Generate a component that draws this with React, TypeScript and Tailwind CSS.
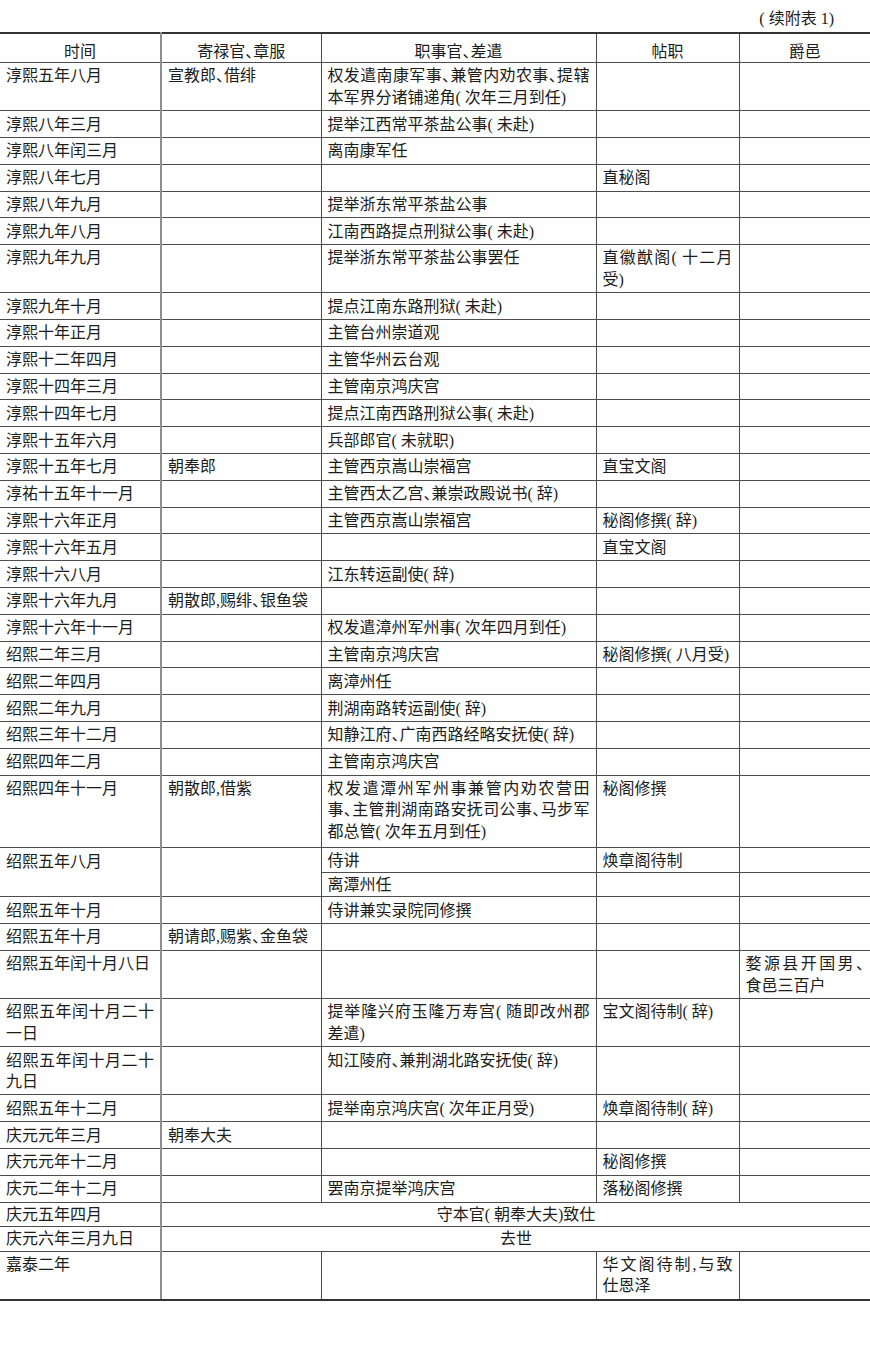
import React from "react";

// rows: [time, 寄禄官, 职事官, 帖职, 爵邑]; "|" marks a forced line break
type Row = {
  cells: string[];
  tall?: boolean;
  span?: boolean;
  compact?: boolean;
};

const rows: Row[] = [
  { cells: ["淳熙五年八月", "宣教郎、借绯", "权发遣南康军事、兼管内劝农事、提辖|本军界分诸铺递角( 次年三月到任)", "", ""] },
  { cells: ["淳熙八年三月", "", "提举江西常平茶盐公事( 未赴)", "", ""] },
  { cells: ["淳熙八年闰三月", "", "离南康军任", "", ""] },
  { cells: ["淳熙八年七月", "", "", "直秘阁", ""] },
  { cells: ["淳熙八年九月", "", "提举浙东常平茶盐公事", "", ""] },
  { cells: ["淳熙九年八月", "", "江南西路提点刑狱公事( 未赴)", "", ""] },
  { cells: ["淳熙九年九月", "", "提举浙东常平茶盐公事罢任", "直徽猷阁( 十二月|受)", ""] },
  { cells: ["淳熙九年十月", "", "提点江南东路刑狱( 未赴)", "", ""] },
  { cells: ["淳熙十年正月", "", "主管台州崇道观", "", ""] },
  { cells: ["淳熙十二年四月", "", "主管华州云台观", "", ""] },
  { cells: ["淳熙十四年三月", "", "主管南京鸿庆宫", "", ""] },
  { cells: ["淳熙十四年七月", "", "提点江南西路刑狱公事( 未赴)", "", ""] },
  { cells: ["淳熙十五年六月", "", "兵部郎官( 未就职)", "", ""] },
  { cells: ["淳熙十五年七月", "朝奉郎", "主管西京嵩山崇福宫", "直宝文阁", ""] },
  { cells: ["淳祐十五年十一月", "", "主管西太乙宫、兼崇政殿说书( 辞)", "", ""] },
  { cells: ["淳熙十六年正月", "", "主管西京嵩山崇福宫", "秘阁修撰( 辞)", ""] },
  { cells: ["淳熙十六年五月", "", "", "直宝文阁", ""] },
  { cells: ["淳熙十六八月", "", "江东转运副使( 辞)", "", ""] },
  { cells: ["淳熙十六年九月", "朝散郎,赐绯、银鱼袋", "", "", ""] },
  { cells: ["淳熙十六年十一月", "", "权发遣漳州军州事( 次年四月到任)", "", ""] },
  { cells: ["绍熙二年三月", "", "主管南京鸿庆宫", "秘阁修撰( 八月受)", ""] },
  { cells: ["绍熙二年四月", "", "离漳州任", "", ""] },
  { cells: ["绍熙二年九月", "", "荆湖南路转运副使( 辞)", "", ""] },
  { cells: ["绍熙三年十二月", "", "知静江府、广南西路经略安抚使( 辞)", "", ""] },
  { cells: ["绍熙四年二月", "", "主管南京鸿庆宫", "", ""] },
  {
    cells: ["绍熙四年十一月", "朝散郎,借紫", "权发遣潭州军州事兼管内劝农营田|事、主管荆湖南路安抚司公事、马步军|都总管( 次年五月到任)", "秘阁修撰", ""],
    tall: true,
  },
];

const rowsAfter: Row[] = [
  { cells: ["绍熙五年十月", "", "侍讲兼实录院同修撰", "", ""] },
  { cells: ["绍熙五年十月", "朝请郎,赐紫、金鱼袋", "", "", ""] },
  { cells: ["绍熙五年闰十月八日", "", "", "", "婺源县开国男、|食邑三百户"] },
  { cells: ["绍熙五年闰十月二十|一日", "", "提举隆兴府玉隆万寿宫( 随即改州郡|差遣)", "宝文阁待制( 辞)", ""] },
  { cells: ["绍熙五年闰十月二十|九日", "", "知江陵府、兼荆湖北路安抚使( 辞)", "", ""] },
  { cells: ["绍熙五年十二月", "", "提举南京鸿庆宫( 次年正月受)", "焕章阁待制( 辞)", ""] },
  { cells: ["庆元元年三月", "朝奉大夫", "", "", ""] },
  { cells: ["庆元元年十二月", "", "", "秘阁修撰", ""] },
  { cells: ["庆元二年十二月", "", "罢南京提举鸿庆宫", "落秘阁修撰", ""] },
  { cells: ["庆元五年四月", "守本官( 朝奉大夫)致仕"], span: true, compact: true },
  { cells: ["庆元六年三月九日", "去世"], span: true, compact: true },
  { cells: ["嘉泰二年", "", "", "华文阁待制,与致|仕恩泽", ""] },
];

const base = "border border-[#4d4d4d] align-top px-[6px] leading-[21.4px]";
const pad = "pt-[2.4px] pb-[2px]";
const padCompact = "pt-[1.4px] pb-[0.7px]";

function edge(i: number, last: boolean) {
  let c = "";
  if (i === 0) c += " border-l-0 border-r-2 border-r-[#8f8f8f]";
  if (i === 4) c += " border-r-0";
  if (last) c += " border-b-2 border-b-[#333]";
  return c;
}

function Lines({ text }: { text: string }) {
  const lines = text.split("|");
  return (
    <>
      {lines.map((l, i) => (
        <span
          key={i}
          className={
            i < lines.length - 1
              ? "block whitespace-nowrap text-justify [text-align-last:justify]"
              : "block whitespace-nowrap"
          }
        >
          {l || "\u00a0"}
        </span>
      ))}
    </>
  );
}

function TableRow({ row, last }: { row: Row; last?: boolean }) {
  const p = row.compact ? padCompact : row.tall ? "pt-[2.4px] pb-[5px]" : pad;
  if (row.span) {
    return (
      <tr>
        <td className={`${base} ${p}${edge(0, !!last)}`}>
          <Lines text={row.cells[0]} />
        </td>
        <td colSpan={4} className={`${base} ${p} text-center border-r-0${last ? " border-b-2 border-b-[#333]" : ""}`}>
          {row.cells[1]}
        </td>
      </tr>
    );
  }
  return (
    <tr>
      {row.cells.map((c, i) => (
        <td key={i} className={`${base} ${p}${edge(i, !!last)}`}>
          <Lines text={c} />
        </td>
      ))}
    </tr>
  );
}

const headers = ["时间", "寄禄官、章服", "职事官、差遣", "帖职", "爵邑"];

export default function App() {
  return (
    <div className="w-[870px] h-[1346px] bg-white text-[#1c1c1c] text-[16px] font-['Liberation_Serif','Noto_Sans_CJK_SC',serif] font-normal [font-feature-settings:'halt']">
      <div className="h-[32px] pt-[8px] pr-[36px] text-right leading-[21.4px]">( 续附表 1)</div>
      <table className="w-[870px] table-fixed border-collapse">
        <colgroup>
          <col className="w-[161px]" />
          <col className="w-[160px]" />
          <col className="w-[275px]" />
          <col className="w-[143px]" />
          <col className="w-[131px]" />
        </colgroup>
        <thead>
          <tr>
            {headers.map((h, i) => (
              <th
                key={i}
                className={`border border-[#4d4d4d] border-t-2 border-t-[#333] font-normal text-center leading-[21.4px] pt-[6.5px] pb-[6px]${
                  i === 0 ? " border-l-0 border-r-2 border-r-[#8f8f8f]" : ""
                }${i === 4 ? " border-r-0" : ""}`}
              >
                {h}
              </th>
            ))}
          </tr>
        </thead>
        <tbody>
          {rows.map((r, i) => (
            <TableRow key={i} row={r} />
          ))}
          <tr>
            <td rowSpan={2} className={`${base} ${pad}${edge(0, false)}`}>
              绍熙五年八月
            </td>
            <td rowSpan={2} className={`${base} ${pad}`}></td>
            <td className={`${base} ${padCompact}`}>侍讲</td>
            <td className={`${base} ${padCompact}`}>焕章阁待制</td>
            <td className={`${base} ${padCompact} border-r-0`}></td>
          </tr>
          <tr>
            <td className={`${base} ${padCompact}`}>离潭州任</td>
            <td className={`${base} ${padCompact}`}></td>
            <td className={`${base} ${padCompact} border-r-0`}></td>
          </tr>
          {rowsAfter.map((r, i) => (
            <TableRow key={i} row={r} last={i === rowsAfter.length - 1} />
          ))}
        </tbody>
      </table>
    </div>
  );
}
